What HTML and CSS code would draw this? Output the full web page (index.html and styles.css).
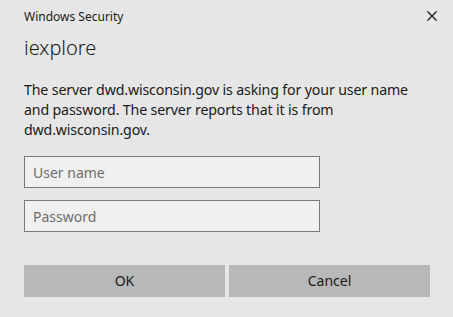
FILE: index.html
```html
<!DOCTYPE html>
<html>
<head>
<meta charset="utf-8">
<link rel="stylesheet" href="styles.css">
</head>
<body>
<div class="dialog">
  <div class="titlebar">
    <span class="title">Windows Security</span>
    <svg class="close" width="10" height="10" viewBox="0 0 10 10"><path d="M0.5 0.5 L9.5 9.5 M9.5 0.5 L0.5 9.5" stroke="#111" stroke-width="1.1" fill="none"/></svg>
  </div>
  <div class="app">iexplore</div>
  <p class="msg">The server dwd.wisconsin.gov is asking for your user name and password. The server reports that it is from dwd.wisconsin.gov.</p>
  <div class="fields">
    <div class="field">User name</div>
    <div class="field">Password</div>
  </div>
  <div class="buttons">
    <div class="btn">OK</div>
    <div class="btn">Cancel</div>
  </div>
</div>
</body>
</html>
```
FILE: styles.css
```css
html, body {
  margin: 0;
  padding: 0;
  background: #e6e6e6;
}
.dialog {
  width: 453px;
  height: 317px;
  box-sizing: border-box;
  padding: 0 23px 0 24px;
  font-family: "Noto Sans", "Open Sans", sans-serif;
  color: #1a1a1a;
}
.titlebar {
  display: flex;
  justify-content: space-between;
  align-items: center;
  height: 32px;
  margin-right: -7px;
}
.title {
  font-size: 12px;
  color: #1a1a1a;
}
.close {
  display: block;
}
.app {
  font-size: 20px;
  line-height: 28px;
  margin-top: 2px;
  font-weight: 300;
}
.msg {
  margin: 18px 0 0 0;
  font-size: 14.2px;
  letter-spacing: -0.15px;
  line-height: 20px;
  width: 400px;
}
.fields {
  margin-top: 16px;
  display: flex;
  flex-direction: column;
  gap: 12px;
}
.field {
  width: 296px;
  height: 32px;
  box-sizing: border-box;
  border: 1px solid #7a7a7a;
  background: #f0f0f0;
  color: #6d6d6d;
  font-size: 14px;
  line-height: 31px;
  padding-left: 8px;
}
.buttons {
  margin-top: 33px;
  display: flex;
  gap: 4px;
}
.btn {
  width: 201px;
  height: 32px;
  background: #b8b8b8;
  color: #1a1a1a;
  font-size: 14px;
  line-height: 32px;
  text-align: center;
}
```
